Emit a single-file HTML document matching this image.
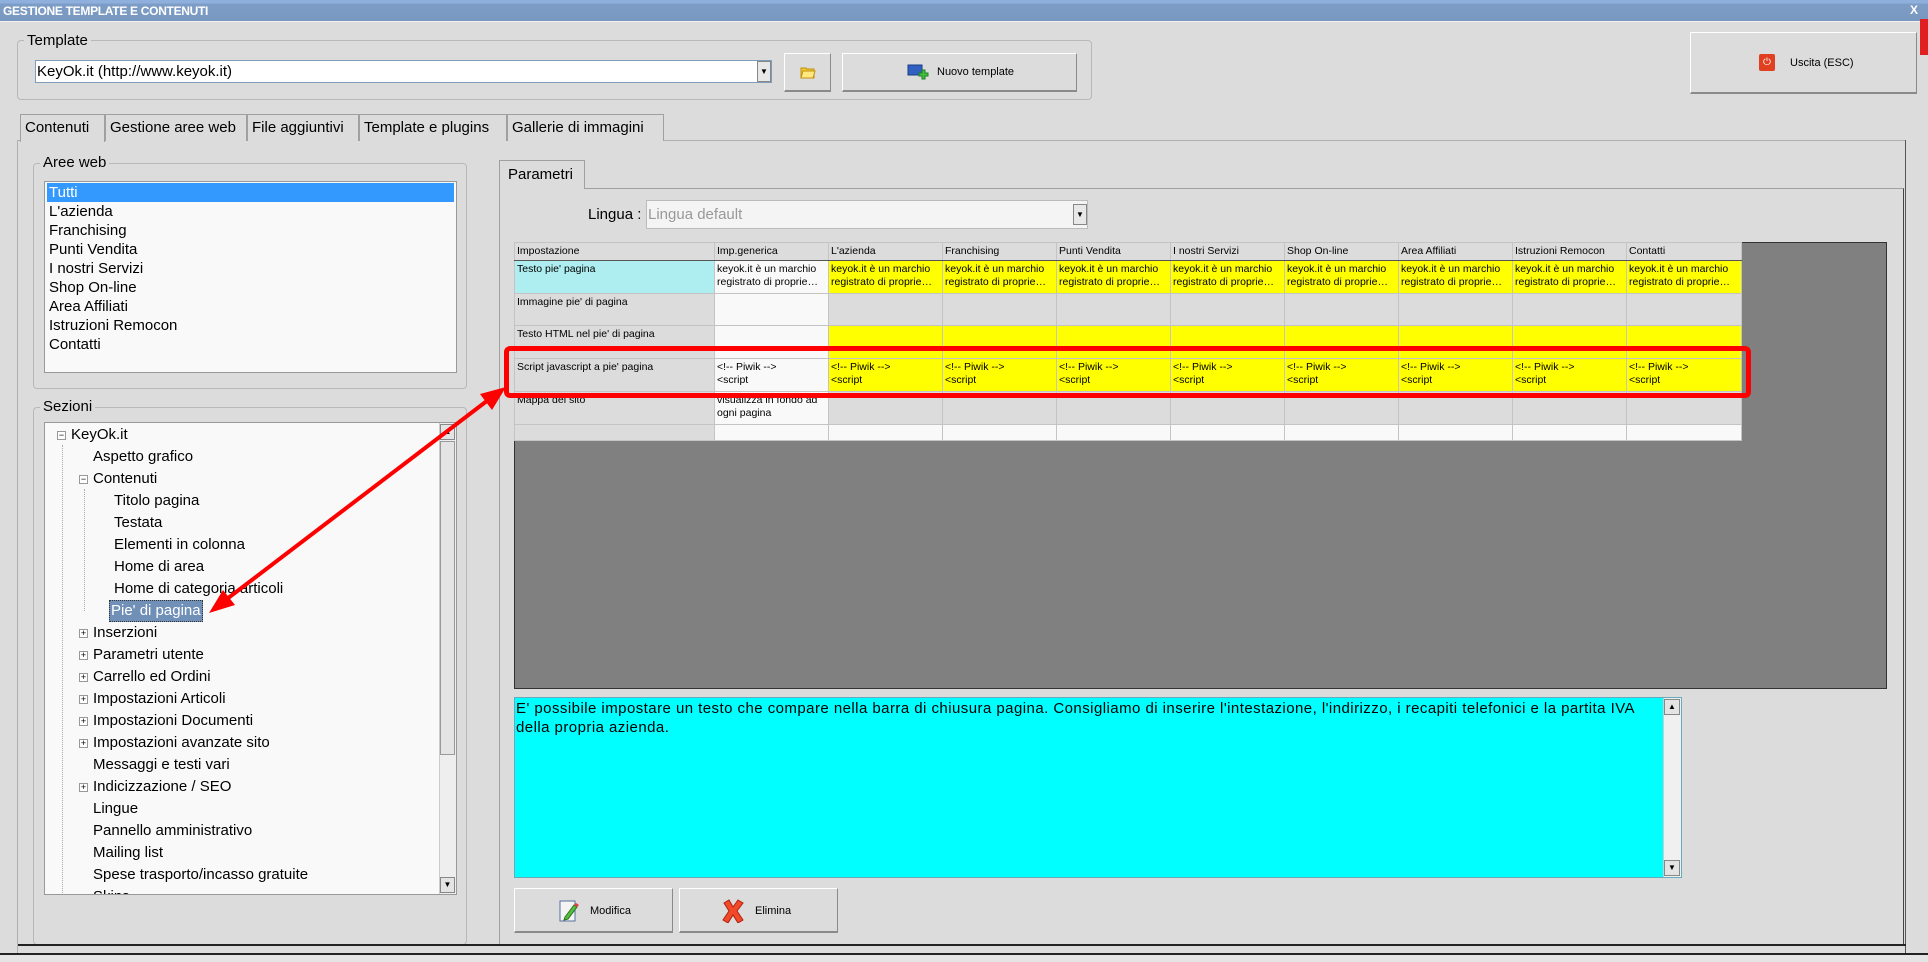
<!DOCTYPE html>
<html><head><meta charset="utf-8">
<style>
*{margin:0;padding:0;box-sizing:border-box}
body{width:1928px;height:962px;overflow:hidden;background:#dcdcdc;font-family:"Liberation Sans",sans-serif;position:relative;color:#000}
.a{position:absolute}
.gb{position:absolute;border:1px solid #b8b8b8;border-radius:4px}
.lg{position:absolute;background:#dcdcdc;padding:0 3px;font-size:15px;line-height:16px;color:#000}
.btn{position:absolute;background:#dcdcdc;border:1px solid #fff;border-right-color:#8a8a8a;border-bottom:2px solid #8a8a8a;font-size:11px}
.tab{position:absolute;top:114px;height:27px;border:1px solid #a0a0a0;border-bottom:none;font-size:15px;line-height:26px;padding-left:4px;background:#dcdcdc;white-space:nowrap}
.li{position:absolute;left:2px;right:2px;height:19px;font-size:15px;line-height:19px;padding-left:2px}
.tr{position:absolute;font-size:15px;line-height:18px;height:22px;white-space:nowrap}
.pm{position:absolute;width:9px;height:9px;border:1px solid #999;background:#fff;font-size:9px;line-height:7px;text-align:center;color:#000}
table{border-collapse:collapse;position:absolute;left:514px;top:242px;table-layout:fixed;font-size:10.5px}
td{border:1px solid #c4c4c4;vertical-align:top;padding:2px 2px;line-height:13px;overflow:hidden;white-space:nowrap}
.y{background:#ffff00}.g{background:#dcdcdc}.w{background:#f9f9f9}.c{background:#aeeef0}
tr.h td{background:#dcdcdc;border-bottom:1px solid #555;height:17px;padding-top:2px}
</style></head><body>
<div class="a" style="left:0;top:0;width:1928px;height:21px;background:linear-gradient(#8fb0dc 0,#8fb0dc 3px,#7d9dc6 4px,#7898c0 21px)"></div>
<div class="a" style="left:0;top:21px;width:1928px;height:1px;background:#f0f0f0"></div>
<div class="a" style="left:3px;top:4px;color:#fff;font-weight:bold;font-size:12px;line-height:14px;letter-spacing:-0.3px">GESTIONE TEMPLATE E CONTENUTI</div>
<div class="a" style="left:1910px;top:3px;color:#fff;font-weight:bold;font-size:12px">X</div>
<div class="a" style="left:1920px;top:19px;width:8px;height:36px;background:#e02020"></div>

<div class="gb" style="left:17px;top:40px;width:1075px;height:60px"></div>
<div class="lg" style="left:24px;top:33px">Template</div>
<div class="a" style="left:35px;top:60px;width:737px;height:23px;background:#fff;border:1px solid #7f9db9;font-size:15px;line-height:21px;padding-left:1px">KeyOk.it (http://www.keyok.it)</div>
<div class="a" style="left:757px;top:61px;width:14px;height:21px;background:#e8e8e8;border:1px solid #888;font-size:8px;line-height:19px;text-align:center">▼</div>
<div class="btn" style="left:784px;top:53px;width:47px;height:39px">
<svg class="a" style="left:15px;top:11px" width="16" height="14" viewBox="0 0 16 14"><path d="M1 3h5l1 1h7v9H1z" fill="#f0c830" stroke="#c09010"/><path d="M3 6h12l-2 7H1z" fill="#ffe880" stroke="#c09010"/></svg></div>
<div class="btn" style="left:842px;top:53px;width:235px;height:39px">
<svg class="a" style="left:64px;top:10px" width="22" height="17" viewBox="0 0 22 17"><rect x="1" y="1" width="14" height="10" fill="#3060c0" stroke="#1a3c88"/><path d="M15 6h3v3h3v3h-3v3h-3v-3h-3v-3h3z" fill="#40c040" stroke="#208020"/></svg>
<span class="a" style="left:94px;top:12px;font-size:11px">Nuovo template</span></div>
<div class="btn" style="left:1690px;top:32px;width:227px;height:62px">
<div class="a" style="left:68px;top:21px;width:16px;height:17px;background:#e04020;border-radius:2px;color:#fff;font-size:10px;line-height:17px;text-align:center">⏻</div>
<span class="a" style="left:99px;top:24px;font-size:11px">Uscita (ESC)</span></div>

<div class="a" style="left:17px;top:140px;width:1888px;height:1px;background:#b0b0b0"></div>
<div class="tab" style="left:20px;width:85px;height:28px;background:#dcdcdc">Contenuti</div>
<div class="tab" style="left:105px;width:142px">Gestione aree web</div>
<div class="tab" style="left:247px;width:112px">File aggiuntivi</div>
<div class="tab" style="left:359px;width:148px">Template e plugins</div>
<div class="tab" style="left:507px;width:157px">Gallerie di immagini</div>
<div class="a" style="left:21px;top:141px;width:83px;height:2px;background:#dcdcdc"></div>
<div class="a" style="left:17px;top:140px;width:1px;height:815px;background:#b0b0b0"></div>
<div class="a" style="left:1905px;top:140px;width:1px;height:815px;background:#555"></div>

<div class="gb" style="left:33px;top:163px;width:434px;height:226px"></div>
<div class="lg" style="left:40px;top:155px">Aree web</div>
<div class="a" style="left:44px;top:181px;width:413px;height:192px;background:#f9f9f9;border:1px solid #999">
<div class="li" style="top:1px;background:#3399ff;color:#fff">Tutti</div>
<div class="li" style="top:20px">L'azienda</div>
<div class="li" style="top:39px">Franchising</div>
<div class="li" style="top:58px">Punti Vendita</div>
<div class="li" style="top:77px">I nostri Servizi</div>
<div class="li" style="top:96px">Shop On-line</div>
<div class="li" style="top:115px">Area Affiliati</div>
<div class="li" style="top:134px">Istruzioni Remocon</div>
<div class="li" style="top:153px">Contatti</div>
</div>

<div class="gb" style="left:33px;top:407px;width:434px;height:538px"></div>
<div class="lg" style="left:40px;top:399px">Sezioni</div>
<div class="a" style="left:44px;top:422px;width:413px;height:473px;background:#f9f9f9;border:1px solid #999;overflow:hidden">
<div class="a" style="left:17px;top:22px;width:1px;height:460px;border-left:1px dotted #aaa"></div>
<div class="a" style="left:39px;top:66px;width:1px;height:122px;border-left:1px dotted #aaa"></div>
<div class="pm" style="left:12px;top:8px">−</div><div class="tr" style="left:26px;top:3px">KeyOk.it</div>
<div class="tr" style="left:48px;top:25px">Aspetto grafico</div>
<div class="pm" style="left:34px;top:52px">−</div><div class="tr" style="left:48px;top:47px">Contenuti</div>
<div class="tr" style="left:69px;top:69px">Titolo pagina</div>
<div class="tr" style="left:69px;top:91px">Testata</div>
<div class="tr" style="left:69px;top:113px">Elementi in colonna</div>
<div class="tr" style="left:69px;top:135px">Home di area</div>
<div class="tr" style="left:69px;top:157px">Home di categoria articoli</div>
<div class="a" style="left:64px;top:177px;width:94px;height:22px;background:#7090b8;border:1px dotted #333"></div>
<div class="tr" style="left:66px;top:179px;color:#fff">Pie' di pagina</div>
<div class="pm" style="left:34px;top:206px">+</div><div class="tr" style="left:48px;top:201px">Inserzioni</div>
<div class="pm" style="left:34px;top:228px">+</div><div class="tr" style="left:48px;top:223px">Parametri utente</div>
<div class="pm" style="left:34px;top:250px">+</div><div class="tr" style="left:48px;top:245px">Carrello ed Ordini</div>
<div class="pm" style="left:34px;top:272px">+</div><div class="tr" style="left:48px;top:267px">Impostazioni Articoli</div>
<div class="pm" style="left:34px;top:294px">+</div><div class="tr" style="left:48px;top:289px">Impostazioni Documenti</div>
<div class="pm" style="left:34px;top:316px">+</div><div class="tr" style="left:48px;top:311px">Impostazioni avanzate sito</div>
<div class="tr" style="left:48px;top:333px">Messaggi e testi vari</div>
<div class="pm" style="left:34px;top:360px">+</div><div class="tr" style="left:48px;top:355px">Indicizzazione / SEO</div>
<div class="tr" style="left:48px;top:377px">Lingue</div>
<div class="tr" style="left:48px;top:399px">Pannello amministrativo</div>
<div class="tr" style="left:48px;top:421px">Mailing list</div>
<div class="tr" style="left:48px;top:443px">Spese trasporto/incasso gratuite</div>
<div class="tr" style="left:48px;top:465px">Skins</div>
<div class="a" style="left:394px;top:0;width:17px;height:471px;background:#eee;border-left:1px solid #ccc"></div>
<div class="a" style="left:395px;top:1px;width:15px;height:16px;background:#e4e4e4;border:1px solid #888;font-size:8px;text-align:center;line-height:14px">▲</div>
<div class="a" style="left:395px;top:18px;width:15px;height:314px;background:#e4e4e4;border:1px solid #999"></div>
<div class="a" style="left:395px;top:454px;width:15px;height:16px;background:#e4e4e4;border:1px solid #888;font-size:8px;text-align:center;line-height:14px">▼</div>
</div>

<div class="a" style="left:499px;top:160px;width:86px;height:29px;border:1px solid #a0a0a0;border-bottom:none;font-size:15px;line-height:28px;padding-left:8px">Parametri</div>
<div class="a" style="left:499px;top:188px;width:1405px;height:757px;border:1px solid #a0a0a0;border-right-color:#444;border-bottom-color:#444"></div>
<div class="a" style="left:500px;top:188px;width:84px;height:2px;background:#dcdcdc"></div>
<div class="a" style="left:588px;top:206px;font-size:15px">Lingua :</div>
<div class="a" style="left:646px;top:200px;width:442px;height:29px;background:#f4f4f4;border:1px solid #bbb;font-size:15px;line-height:27px;padding-left:1px;color:#999">Lingua default</div>
<div class="a" style="left:1073px;top:204px;width:14px;height:21px;background:#e8e8e8;border:1px solid #888;font-size:8px;line-height:19px;text-align:center">▼</div>

<div class="a" style="left:514px;top:242px;width:1373px;height:447px;background:#808080;border:1px solid #333"></div>
<table>
<colgroup><col style="width:200px"><col style="width:114px"><col style="width:114px"><col style="width:114px"><col style="width:114px"><col style="width:114px"><col style="width:114px"><col style="width:114px"><col style="width:114px"><col style="width:115px"></colgroup>
<tr class="h"><td>Impostazione</td><td>Imp.generica</td><td>L'azienda</td><td>Franchising</td><td>Punti Vendita</td><td>I nostri Servizi</td><td>Shop On-line</td><td>Area Affiliati</td><td>Istruzioni Remocon</td><td>Contatti</td></tr>
<tr style="height:33px"><td class="c">Testo pie' pagina</td><td class="w">keyok.it è un marchio<br>registrato di proprie…</td><td class="y">keyok.it è un marchio<br>registrato di proprie…</td><td class="y">keyok.it è un marchio<br>registrato di proprie…</td><td class="y">keyok.it è un marchio<br>registrato di proprie…</td><td class="y">keyok.it è un marchio<br>registrato di proprie…</td><td class="y">keyok.it è un marchio<br>registrato di proprie…</td><td class="y">keyok.it è un marchio<br>registrato di proprie…</td><td class="y">keyok.it è un marchio<br>registrato di proprie…</td><td class="y">keyok.it è un marchio<br>registrato di proprie…</td></tr>
<tr style="height:32px"><td class="g">Immagine pie' di pagina</td><td class="w"></td><td class="g"></td><td class="g"></td><td class="g"></td><td class="g"></td><td class="g"></td><td class="g"></td><td class="g"></td><td class="g"></td></tr>
<tr style="height:33px"><td class="g">Testo HTML nel pie' di pagina</td><td class="w"></td><td class="y"></td><td class="y"></td><td class="y"></td><td class="y"></td><td class="y"></td><td class="y"></td><td class="y"></td><td class="y"></td></tr>
<tr style="height:33px"><td class="g">Script javascript a pie' pagina</td><td class="w">&lt;!-- Piwik --&gt;<br>&lt;script</td><td class="y">&lt;!-- Piwik --&gt;<br>&lt;script</td><td class="y">&lt;!-- Piwik --&gt;<br>&lt;script</td><td class="y">&lt;!-- Piwik --&gt;<br>&lt;script</td><td class="y">&lt;!-- Piwik --&gt;<br>&lt;script</td><td class="y">&lt;!-- Piwik --&gt;<br>&lt;script</td><td class="y">&lt;!-- Piwik --&gt;<br>&lt;script</td><td class="y">&lt;!-- Piwik --&gt;<br>&lt;script</td><td class="y">&lt;!-- Piwik --&gt;<br>&lt;script</td></tr>
<tr style="height:33px"><td class="g">Mappa del sito</td><td class="w">visualizza in fondo ad<br>ogni pagina</td><td class="g"></td><td class="g"></td><td class="g"></td><td class="g"></td><td class="g"></td><td class="g"></td><td class="g"></td><td class="g"></td></tr>
<tr style="height:16px"><td class="g"></td><td class="w"></td><td class="w"></td><td class="w"></td><td class="w"></td><td class="w"></td><td class="w"></td><td class="w"></td><td class="w"></td><td class="w"></td></tr>
</table>
<div class="a" style="left:504px;top:346px;width:1247px;height:52px;border:5px solid #f00;border-radius:6px"></div>

<svg class="a" style="left:0;top:0" width="1928" height="962">
<line x1="496" y1="394" x2="219" y2="605" stroke="#f00" stroke-width="4"/>
<polygon points="506,387 480,394 492,410" fill="#f00"/>
<polygon points="209,613 235,605 223,590" fill="#f00"/>
</svg>

<div class="a" style="left:514px;top:697px;width:1168px;height:181px;background:#00ffff;border:1px solid #6ab;font-size:15px;letter-spacing:0.45px;line-height:19px;padding:1px 26px 0 1px">E' possibile impostare un testo che compare nella barra di chiusura pagina. Consigliamo di inserire l'intestazione, l'indirizzo, i recapiti telefonici e la partita IVA della propria azienda.</div>
<div class="a" style="left:1663px;top:698px;width:18px;height:179px;background:#f0f0f0;border-left:1px solid #ccc"></div>
<div class="a" style="left:1664px;top:699px;width:16px;height:16px;background:#e4e4e4;border:1px solid #888;font-size:8px;text-align:center;line-height:14px">▲</div>
<div class="a" style="left:1664px;top:860px;width:16px;height:16px;background:#e4e4e4;border:1px solid #888;font-size:8px;text-align:center;line-height:14px">▼</div>

<div class="btn" style="left:514px;top:888px;width:159px;height:45px">
<svg class="a" style="left:44px;top:10px" width="20" height="24" viewBox="0 0 20 24"><rect x="1" y="2" width="15" height="20" fill="#f4f4f4" stroke="#5570a0"/><path d="M6 18l9-12 3 2-9 12-4 1z" fill="#50c040" stroke="#307020"/><path d="M15 6l2-2 3 2-2 2z" fill="#e04040"/></svg>
<span class="a" style="left:75px;top:16px">Modifica</span></div>
<div class="btn" style="left:679px;top:888px;width:159px;height:45px">
<svg class="a" style="left:42px;top:10px" width="22" height="24" viewBox="0 0 22 24"><path d="M2 4l5-3 4 7 5-7 5 3-6 8 6 9-5 3-5-8-5 8-5-3 6-9z" fill="#f04a2a" stroke="#b02010"/></svg>
<span class="a" style="left:75px;top:16px">Elimina</span></div>

<div class="a" style="left:18px;top:944px;width:1888px;height:2px;background:#222"></div>
<div class="a" style="left:0;top:953px;width:1928px;height:2px;background:#222"></div>
<div class="a" style="left:0;top:955px;width:1928px;height:7px;background:#e4e4e4"></div>
</body></html>
